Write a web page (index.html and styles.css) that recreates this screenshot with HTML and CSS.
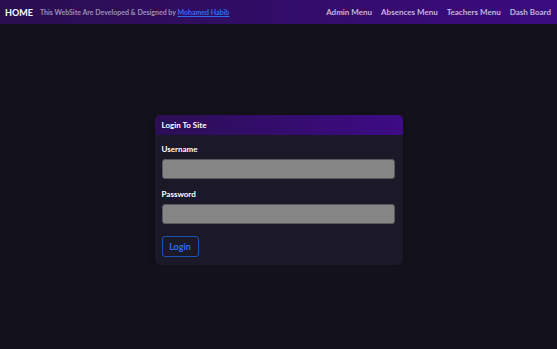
FILE: index.html
```html
<!DOCTYPE html>
<html lang="en">
<head>
  <meta charset="UTF-8" />
  <meta name="viewport" content="width=device-width, initial-scale=1.0" />
  <title>Login</title>
  <link rel="stylesheet" href="styles.css">
</head>
<body>
  <nav class="navbar">
    <div class="brand">
      <a class="home" href="#">HOME</a>
      <span class="credit">This WebSite Are Developed &amp; Designed by <a href="#">Mohamed Habib</a></span>
    </div>
    <ul class="menu">
      <li><a href="#">Admin Menu</a></li>
      <li><a href="#">Absences Menu</a></li>
      <li><a href="#">Teachers Menu</a></li>
      <li><a href="#">Dash Board</a></li>
    </ul>
  </nav>

  <main class="page">
    <div class="card">
      <div class="card-header">Login To Site</div>
      <form class="card-body">
        <label for="username">Username</label>
        <input type="text" id="username">

        <label for="password">Password</label>
        <input type="password" id="password">

        <button type="submit">Login</button>
      </form>
    </div>
  </main>
</body>
</html>
```

FILE: styles.css
```css
body {
  font-family: 'Lato', 'Noto Sans', sans-serif;
  background: #13121b;
  margin: 0;
  padding: 0;
  color: #fff;
}
.navbar {
  height: 24px;
  display: flex;
  align-items: center;
  justify-content: space-between;
  padding: 0 6px 0 5px;
  background: linear-gradient(90deg, #2a0e50 0%, #3a0b80 100%);
}
.brand {
  display: flex;
  align-items: center;
  gap: 7px;
}
.home {
  color: #fff;
  font-weight: bold;
  font-size: 9px;
  text-decoration: none;
}
.credit {
  color: #9b8fb4;
  font-size: 7px;
  font-weight: bold;
}
.credit a {
  color: #2f6cf0;
}
.menu {
  list-style: none;
  display: flex;
  align-items: center;
  gap: 9px;
  margin: 0;
  padding: 0;
  font-size: 8px;
  line-height: 1;
}
.menu a {
  color: #c3b6dd;
  font-weight: bold;
  text-decoration: none;
}
.page {
  display: flex;
  justify-content: center;
  padding-top: 91px;
}
.card {
  width: 248px;
  background: #1b1928;
  border-radius: 5px;
  overflow: hidden;
  box-shadow: 0 2px 6px rgba(0,0,0,0.3);
}
.card-header {
  height: 20px;
  line-height: 21px;
  padding: 0 7px;
  font-size: 8px;
  font-weight: bold;
  background: linear-gradient(90deg, #2b0e54 0%, #3d0b85 100%);
}
.card-body {
  padding: 9px 8px 8px 7px;
  display: flex;
  flex-direction: column;
}
label {
  font-size: 8px;
  font-weight: bold;
  margin-bottom: 5px;
}
input {
  height: 20px;
  box-sizing: border-box;
  background: #858585;
  border: 1px solid #5a5a5e;
  border-radius: 3px;
  margin-bottom: 10px;
}
button {
  align-self: flex-start;
  width: 37px;
  height: 21px;
  margin-top: 2px;
  background: transparent;
  border: 1px solid #1c4fb8;
  border-radius: 3px;
  color: #2b6cf6;
  font-family: inherit;
  font-size: 9px;
  font-weight: bold;
  padding: 0;
  cursor: pointer;
}
```
